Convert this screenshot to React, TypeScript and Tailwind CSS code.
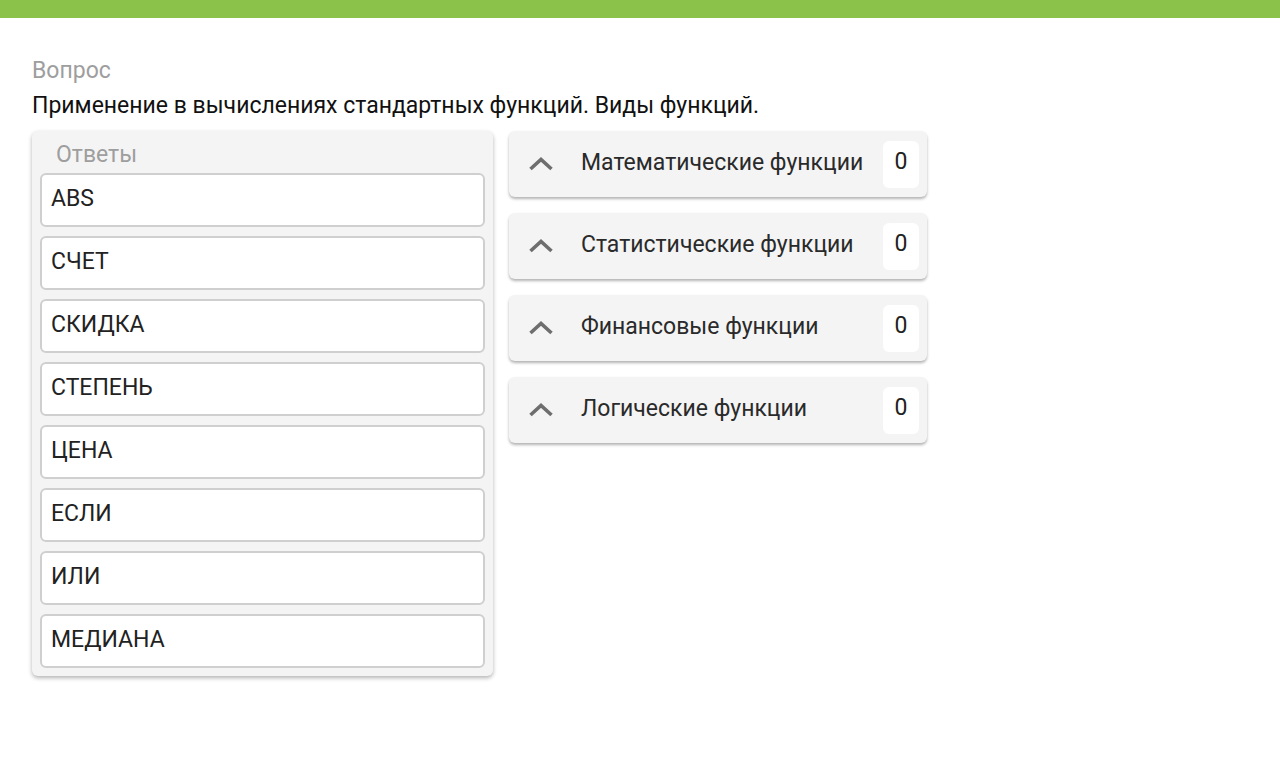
import { FC } from 'react';

const answers = ['ABS', 'СЧЕТ', 'СКИДКА', 'СТЕПЕНЬ', 'ЦЕНА', 'ЕСЛИ', 'ИЛИ', 'МЕДИАНА'];

const groups = [
  'Математические функции',
  'Статистические функции',
  'Финансовые функции',
  'Логические функции',
];

const ChevronUp: FC = () => (
  <svg width="26" height="16" viewBox="0 0 26 16" className="text-[#6e6e6e]">
    <path d="M2.5 13 13 3.5 23.5 13" fill="none" stroke="currentColor" strokeWidth="3.6" />
  </svg>
);

export default function App() {
  return (
    <div className="min-h-[767px] bg-white text-[#212121] font-['Roboto',sans-serif]">
      <div className="h-[18px] bg-[#8bc34a]" />
      <div className="px-8 pt-[39px]">
        <div className="text-[23px] leading-[28px] text-[#9e9e9e]">Вопрос</div>
        <div className="mt-[7px] text-[23px] leading-[28px] text-[#111]">
          Применение в вычислениях стандартных функций. Виды функций.
        </div>

        <div className="mt-[11px] flex items-start gap-4">
          <div className="w-[461px] rounded-md bg-[#f4f4f4] px-2 pb-2 shadow-[0_2px_4px_rgba(0,0,0,0.3)]">
            <div className="pl-4 pt-[10px] pb-[4px] text-[23px] leading-[28px] text-[#9e9e9e]">Ответы</div>
            <div className="flex flex-col gap-[9px]">
              {answers.map((a) => (
                <div
                  key={a}
                  className="flex h-[54px] items-center rounded-md border-2 border-[#cfcfcf] bg-white pl-[9px] pb-[1px] text-[23px] text-[#222]"
                >
                  {a}
                </div>
              ))}
            </div>
          </div>

          <div className="flex w-[418px] flex-col gap-4">
            {groups.map((g) => (
              <div
                key={g}
                className="flex h-[66px] items-center rounded-md bg-[#f4f4f4] pl-[19px] pr-2 shadow-[0_2px_3px_rgba(0,0,0,0.3)]"
              >
                <ChevronUp />
                <div className="ml-[27px] flex-1 pb-[1px] text-[23px] text-[#2a2a2a]">{g}</div>
                <div className="flex h-[47px] w-[36px] items-center justify-center rounded-md bg-white pb-[3px] text-[23px] text-[#222]">
                  0
                </div>
              </div>
            ))}
          </div>
        </div>
      </div>
    </div>
  );
}
